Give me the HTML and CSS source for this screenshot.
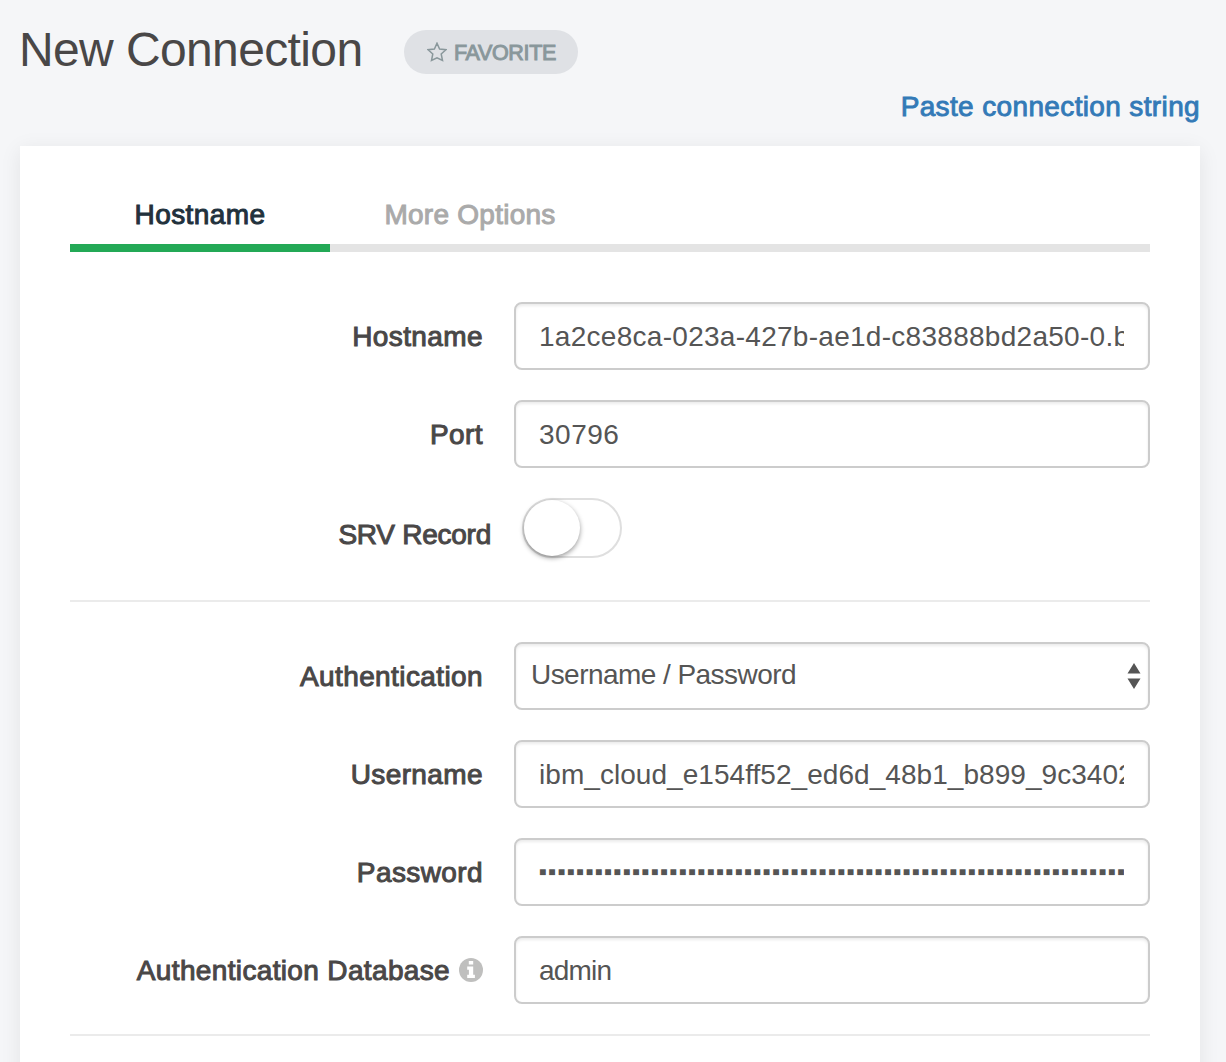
FILE: index.html
```html
<!DOCTYPE html>
<html lang="en">
<head>
<meta charset="utf-8">
<title>New Connection</title>
<link rel="stylesheet" href="styles.css">
</head>
<body>
<header class="header">
  <h1 class="title">New Connection</h1>
  <button class="favorite" type="button">
    <svg class="star" viewBox="0 0 20 20" width="20" height="20"><path d="M10 1.2 12.6 7l6.3.7-4.7 4.2 1.3 6.6L10 15.8l-5.5 2.7 1.3-6.6L1.1 7.7 7.4 7z"/></svg>
    <span class="favorite-text">FAVORITE</span>
  </button>
</header>
<div class="paste"><a class="paste-link">Paste connection string</a></div>
<main class="card">
  <nav class="tabs">
    <div class="tab tab-active">Hostname</div>
    <div class="tab tab-more">More Options</div>
  </nav>
  <form class="form">
    <section class="group">
      <div class="row"><label class="label">Hostname</label><div class="input"><span class="value host">1a2ce8ca-023a-427b-ae1d-c83888bd2a50-0.b</span></div></div>
      <div class="row"><label class="label">Port</label><div class="input"><span class="value port">30796</span></div></div>
      <div class="row row-switch"><label class="label">SRV Record</label><div class="switch"><div class="knob"></div></div></div>
    </section>
    <section class="group group-auth">
      <div class="row"><label class="label">Authentication</label><div class="input select"><span class="value">Username / Password</span>
        <svg class="arrows" viewBox="0 0 14 26" width="14" height="26"><path d="M7 0l6.5 10.5H.5zM.5 15.5h13L7 26z"/></svg></div></div>
      <div class="row"><label class="label">Username</label><div class="input"><span class="value user">ibm_cloud_e154ff52_ed6d_48b1_b899_9c3402</span></div></div>
      <div class="row"><label class="label">Password</label><div class="input"><span class="value secret">■■■■■■■■■■■■■■■■■■■■■■■■■■■■■■■■■■■■■■■■■■■■■■■■■■■■■■■■■■■■■■■</span></div></div>
      <div class="row"><label class="label label-db">Authentication Database
        <svg class="info" viewBox="0 0 24 24" width="24" height="24"><circle cx="12" cy="12" r="12"/><path d="M9.8 3h4.4v3.5H9.8zM8.2 8.5h6v8.3h1.7V20H8.2v-3.2h1.7v-5.1H8.2z"/></svg></label><div class="input"><span class="value db">admin</span></div></div>
    </section>
  </form>
</main>
</body>
</html>
```

FILE: styles.css
```css
* { box-sizing: border-box; }

body {
  margin: 0;
  height: 1062px;
  overflow: hidden;
  background: #f5f6f8;
  color: #494747;
  font: 28px/36px "Liberation Sans", Arial, sans-serif;
}

.header {
  display: flex;
  align-items: flex-start;
  gap: 40px;
  height: 88px;
  padding: 22px 20px 0 18px;
}

.title {
  width: 346px;
  margin: 0;
  padding-left: 1px;
  font-size: 48px;
  font-weight: 400;
  line-height: 56px;
  letter-spacing: -0.62px;
  white-space: nowrap;
}

.favorite {
  display: flex;
  align-items: center;
  gap: 7px;
  width: 174px;
  height: 44px;
  margin-top: 8px;
  padding: 0 0 0 23px;
  border: 0;
  border-radius: 22px;
  background: #dfe1e5;
  color: #89979b;
  font: 21.5px/44px "Liberation Sans", Arial, sans-serif;
  letter-spacing: -0.35px;
  -webkit-text-stroke: 1px;
}

.favorite-text { padding-top: 1px; }

.star {
  flex: none;
  fill: none;
  stroke: #89979b;
  stroke-width: 1.5;
}

.paste {
  height: 58px;
  padding: 1px 26px 0 0;
  text-align: right;
}

.paste-link {
  color: #337ab7;
  letter-spacing: 0.36px;
  -webkit-text-stroke: 0.9px;
}

.card {
  height: 940px;
  margin: 0 26px 0 20px;
  padding: 40px 50px 0;
  background: #fff;
  box-shadow: 0 4px 20px rgba(0, 0, 0, 0.08);
}

.tabs {
  display: flex;
  height: 66px;
  box-shadow: inset 0 -8px #e4e4e4;
}

.tab {
  width: 260px;
  height: 66px;
  padding-top: 11px;
  text-align: center;
  letter-spacing: 0.4px;
  -webkit-text-stroke: 1px;
}

.tab-active {
  border-bottom: 8px solid #23a956;
  color: #21313c;
}

.tab-more {
  width: 280px;
  color: #aaa;
  letter-spacing: 0.25px;
}

.group {
  display: flex;
  flex-direction: column;
  gap: 30px;
  height: 350px;
  padding-top: 50px;
  border-bottom: 2px solid #ebebeb;
}

.group-auth {
  height: 434px;
  padding-top: 40px;
}

.row {
  display: grid;
  grid-template-columns: 414px 636px;
  gap: 30px;
  height: 68px;
  align-items: center;
}

.label {
  display: flex;
  align-items: center;
  justify-content: flex-end;
  gap: 9px;
  padding: 2px 1px 0 0;
  letter-spacing: 0.4px;
  white-space: nowrap;
  -webkit-text-stroke: 1px;
}

.label-db { letter-spacing: 0.35px; }

.input {
  display: flex;
  align-items: center;
  height: 68px;
  padding: 2px 24px 0 23px;
  border: 2px solid #ccc;
  border-radius: 8px;
  background: #fff;
  box-shadow: inset 0 2px 3px rgba(0, 0, 0, 0.08);
  color: #555;
}

.value {
  overflow: hidden;
  white-space: nowrap;
}

.host { letter-spacing: 0.28px; }
.port { letter-spacing: 0.5px; }
.user { letter-spacing: 0.05px; }
.db { letter-spacing: -0.8px; }

.secret {
  margin-top: -2px;
  font-size: 12px;
  line-height: 20px;
  letter-spacing: 2.08px;
}

.select {
  justify-content: space-between;
  padding: 0 7px 2px 15px;
  letter-spacing: -0.55px;
}

.arrows {
  flex: none;
  margin-top: 2px;
  fill: #555;
}

.row-switch {
  grid-template-columns: 422px 100px;
  height: 60px;
}

.row-switch .label {
  padding-top: 14px;
  letter-spacing: -0.25px;
}

.switch {
  width: 100px;
  height: 60px;
  border: 2px solid #dfdfdf;
  border-radius: 30px;
}

.knob {
  width: 56px;
  height: 56px;
  border-radius: 50%;
  background: #fff;
  box-shadow: 0 2px 5px rgba(0, 0, 0, 0.4);
}

.info { flex: none; margin-top: -2px; fill: #bfbfbe; }
.info path { fill: #fff; }
.info * { stroke: none; }
```
